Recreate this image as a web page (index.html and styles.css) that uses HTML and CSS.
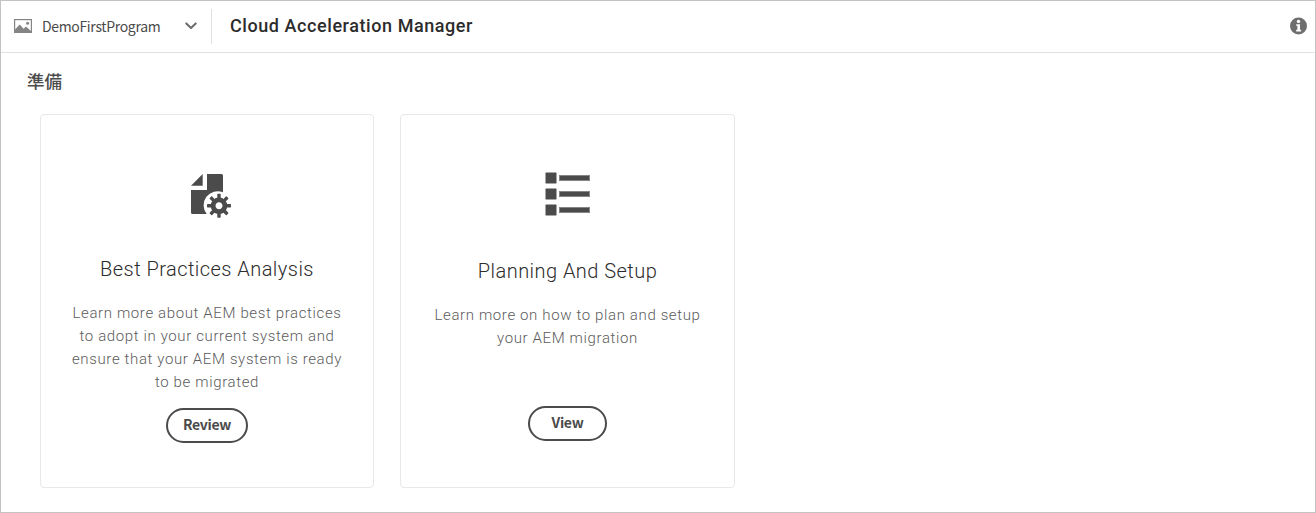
FILE: index.html
```html
<!DOCTYPE html>
<html lang="ja">
<head>
<meta charset="utf-8">
<title>Cloud Acceleration Manager</title>
<link rel="stylesheet" href="styles.css">
</head>
<body>
<div class="app">
  <header class="topbar">
    <div class="program">
      <svg class="program-icon" width="18" height="14" viewBox="0 0 18 14"><rect x=".6" y=".6" width="16.8" height="12.8" fill="none" stroke="#858585" stroke-width="1.2"/><path d="M1 10.5 5.7 5.6 9.6 9.8 12 7.6 17 12V13.4H1Z" fill="#858585"/><circle cx="13.6" cy="4.3" r="1.5" fill="#858585"/></svg>
      <span class="program-name">DemoFirstProgram</span>
      <svg class="chevron" width="12" height="8" viewBox="0 0 12 8"><path d="M1.3 1.4 6 6.1 10.7 1.4" fill="none" stroke="#6e6e6e" stroke-width="2.1" stroke-linecap="round" stroke-linejoin="round"/></svg>
    </div>
    <h1 class="title">Cloud Acceleration Manager</h1>
    <svg class="info" width="18" height="18" viewBox="0 0 18 18"><circle cx="9.500" cy="9" r="8.500" fill="#6e6e6e"/><circle cx="9.500" cy="4.400" r="1.700" fill="#fff"/><path d="M7.200 7.200H11V12.700H12.100V14.400H7.200V12.700H8.400V8.800H7.200Z" fill="#fff"/></svg>
  </header>
  <main class="content">
    <h2 class="section">準備</h2>
    <div class="cards">
      <section class="card card-bpa">
        <svg class="card-icon" width="56" height="48" viewBox="0 0 56 48">
          <path d="M23.700 6V17.700H12Z" fill="#4b4b4b"/>
          <path d="M28 6H42.500Q44 6 44 7.500V24.300A14 14 0 0 0 27.700 46H13.500Q12 46 12 44.500V22H28Z" fill="#4b4b4b"/>
          <g transform="translate(40 37.800)">
            <circle r="5.900" fill="none" stroke="#4b4b4b" stroke-width="4.800"/>
            <g fill="#4b4b4b"><rect id="tooth" x="-1.700" y="-12" width="3.400" height="5" rx=".7"/><use href="#tooth" transform="rotate(45)"/><use href="#tooth" transform="rotate(90)"/><use href="#tooth" transform="rotate(135)"/><use href="#tooth" transform="rotate(180)"/><use href="#tooth" transform="rotate(225)"/><use href="#tooth" transform="rotate(270)"/><use href="#tooth" transform="rotate(315)"/></g>
          </g>
        </svg>
        <h3 class="card-title">Best Practices Analysis</h3>
        <p class="card-text">Learn more about AEM best practices<br>to adopt in your current system and<br>ensure that your AEM system is ready<br>to be migrated</p>
        <button class="button">Review</button>
      </section>
      <section class="card card-plan">
        <svg class="card-icon" width="49" height="48" viewBox="0 0 49 48">
          <g fill="#4b4b4b" stroke="#a6a6a6" stroke-width="1"><rect x="2.500" y="4.500" width="11" height="11" rx="1"/><rect x="2.500" y="20.500" width="11" height="11" rx="1"/><rect x="2.500" y="36.500" width="11" height="11" rx="1"/></g>
          <g fill="#4b4b4b" stroke="#858585" stroke-width="1"><rect x="16.500" y="7.500" width="30" height="5"/><rect x="16.500" y="23.500" width="30" height="5"/><rect x="16.500" y="39.500" width="30" height="5"/></g>
        </svg>
        <h3 class="card-title">Planning And Setup</h3>
        <p class="card-text">Learn more on how to plan and setup<br>your AEM migration</p>
        <button class="button">View</button>
      </section>
    </div>
  </main>
</div>
</body>
</html>
```
FILE: styles.css
```css
* { box-sizing: border-box; }
body { margin: 0; background: #fff; color: #4b4b4b; font-family: "Noto Sans CJK JP", sans-serif; }
h1, h2, h3, p { margin: 0; font-weight: 400; }
svg { display: block; flex: none; overflow: visible; }
.app { height: 513px; border: 1px solid #c3c3c3; overflow: hidden; }
.topbar { display: flex; align-items: center; height: 52px; padding-right: 8px; border-bottom: 1px solid #e1e1e1; }
.program { display: flex; align-items: center; width: 211px; height: 35px; padding-left: 13px; border-right: 1px solid #e1e1e1; }
.program-icon, .chevron { margin-bottom: 1px; }
.program-name { width: 143px; margin-left: 10px; padding-bottom: 2px; font-size: 14px; line-height: 20px; letter-spacing: -.34px; white-space: nowrap; }
.title { margin-left: 18px; padding-bottom: 2px; color: #2c2c2c; font: 500 18px/26px Roboto, sans-serif; letter-spacing: .57px; white-space: nowrap; }
.info { margin: 0 0 2px auto; }
.section { height: 61px; padding: 15px 0 0 26px; font-size: 17.5px; font-weight: 500; line-height: 26px; }
.cards { display: flex; gap: 26px; padding-left: 39px; }
.card { display: flex; flex-direction: column; align-items: center; height: 374px; border: 1px solid #e8e8e8; border-radius: 4px; text-align: center; }
.card-bpa { width: 334px; padding-top: 53px; }
.card-plan { width: 335px; padding-top: 53px; }
.card-title { margin-top: 39px; color: #2c2c2c; font: 300 20px/28px Roboto, sans-serif; letter-spacing: .46px; white-space: nowrap; }
.card-text { height: 92px; margin-top: 19px; color: #5c5c5c; font: 300 15px/23px Roboto, sans-serif; letter-spacing: .63px; white-space: nowrap; }
.card-plan .card-title { margin-top: 41px; }
.button { height: 35px; padding: 0 0 4px; border: 2px solid #4b4b4b; border-radius: 18px; background: #fff; color: #4b4b4b; font: 700 14px/20px "Noto Sans CJK JP", sans-serif; letter-spacing: -.3px; }
.card-bpa .button { width: 82px; margin-top: 14px; }
.card-plan .button { width: 79px; margin-top: 10px; }
```
